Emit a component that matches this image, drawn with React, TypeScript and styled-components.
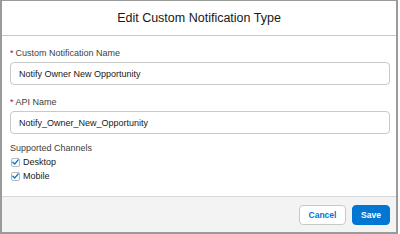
import React, { useState } from "react";
import styled, { createGlobalStyle } from "styled-components";

const GlobalStyle = createGlobalStyle`
  html, body {
    margin: 0;
    padding: 0;
    background: #fff;
  }
  body {
    font-family: "Liberation Sans", Arial, sans-serif;
  }
`;

export default function App() {
  const [desktop, setDesktop] = useState(true);
  const [mobile, setMobile] = useState(true);

  return (
    <>
      <GlobalStyle />
      <StyledModal>
        <StyledHeader>
          <StyledTitle>Edit Custom Notification Type</StyledTitle>
        </StyledHeader>
        <StyledBody>
          <StyledField>
            <StyledLabel>
              <StyledRequired>*</StyledRequired>Custom Notification Name
            </StyledLabel>
            <StyledInput defaultValue="Notify Owner New Opportunity" />
          </StyledField>
          <StyledField>
            <StyledLabel>
              <StyledRequired>*</StyledRequired>API Name
            </StyledLabel>
            <StyledInput defaultValue="Notify_Owner_New_Opportunity" />
          </StyledField>
          <StyledGroup>
            <StyledLabel $tight>Supported Channels</StyledLabel>
            <StyledCheckRow onClick={() => setDesktop(!desktop)}>
              <StyledBox>{desktop && <CheckMark />}</StyledBox>
              <StyledCheckText>Desktop</StyledCheckText>
            </StyledCheckRow>
            <StyledCheckRow onClick={() => setMobile(!mobile)}>
              <StyledBox>{mobile && <CheckMark />}</StyledBox>
              <StyledCheckText>Mobile</StyledCheckText>
            </StyledCheckRow>
          </StyledGroup>
        </StyledBody>
        <StyledFooter>
          <StyledButton>Cancel</StyledButton>
          <StyledButton $brand>Save</StyledButton>
        </StyledFooter>
      </StyledModal>
    </>
  );
}

function CheckMark() {
  return (
    <svg width="7" height="6" viewBox="0 0 7 6">
      <path
        d="M0.8 3.2 L2.7 5 L6.2 0.9"
        fill="none"
        stroke="#0176d3"
        strokeWidth="1.3"
        strokeLinecap="round"
        strokeLinejoin="round"
      />
    </svg>
  );
}

// style
const StyledModal = styled.div`
  display: flex;
  flex-direction: column;
  box-sizing: border-box;
  width: 398px;
  height: 234px;
  border: 2px solid #9a9a9a;
  border-top-width: 1px;
  background: #fff;
`;

const StyledHeader = styled.header`
  display: flex;
  align-items: center;
  justify-content: center;
  height: 34px;
  border-bottom: 1px solid #c9c9c9;
`;

const StyledTitle = styled.h2`
  margin: 0;
  font-size: 12.5px;
  font-weight: 400;
  color: #181818;
`;

const StyledBody = styled.section`
  flex: 1;
  display: flex;
  flex-direction: column;
  padding: 12px 6px 0 8px;
`;

const StyledField = styled.div`
  display: flex;
  flex-direction: column;
  margin-bottom: 12px;

  &:nth-of-type(2) {
    margin-bottom: 9px;
  }
`;

const StyledLabel = styled.label<{ $tight?: boolean }>`
  font-size: 9px;
  line-height: 11px;
  color: #3e3e3c;
  margin-bottom: ${(p) => (p.$tight ? "1px" : "3px")};
`;

const StyledRequired = styled.span`
  color: #ba0517;
  margin-right: 2px;
`;

const StyledInput = styled.input`
  box-sizing: border-box;
  height: 23px;
  padding: 0 8px;
  border: 1px solid #c9c9c9;
  border-radius: 4px;
  font-family: "Liberation Sans", Arial, sans-serif;
  font-size: 9px;
  color: #181818;
  outline: none;
`;

const StyledGroup = styled.div`
  display: flex;
  flex-direction: column;
`;

const StyledCheckRow = styled.div`
  display: flex;
  align-items: center;
  height: 14px;
  padding-left: 1px;
  cursor: pointer;
`;

const StyledBox = styled.span`
  display: flex;
  align-items: center;
  justify-content: center;
  box-sizing: border-box;
  width: 9px;
  height: 9px;
  border: 1px solid #b8b8b8;
  border-radius: 2px;
  background: #fff;
  margin-right: 3px;
`;

const StyledCheckText = styled.span`
  font-size: 9px;
  line-height: 14px;
  color: #181818;
`;

const StyledFooter = styled.footer`
  display: flex;
  align-items: center;
  justify-content: flex-end;
  gap: 6px;
  height: 35px;
  padding: 0 6px;
  border-top: 1px solid #d8d8d8;
  background: #f3f3f3;
`;

const StyledButton = styled.button<{ $brand?: boolean }>`
  box-sizing: border-box;
  height: 20px;
  padding: 0;
  width: ${(p) => (p.$brand ? "38px" : "47px")};
  border: 1px solid ${(p) => (p.$brand ? "#0176d3" : "#c9c9c9")};
  border-radius: 4px;
  background: ${(p) => (p.$brand ? "#0176d3" : "#fff")};
  color: ${(p) => (p.$brand ? "#fff" : "#0176d3")};
  font-family: "Liberation Sans", Arial, sans-serif;
  font-size: 8.5px;
  font-weight: 700;
  cursor: pointer;
`;
